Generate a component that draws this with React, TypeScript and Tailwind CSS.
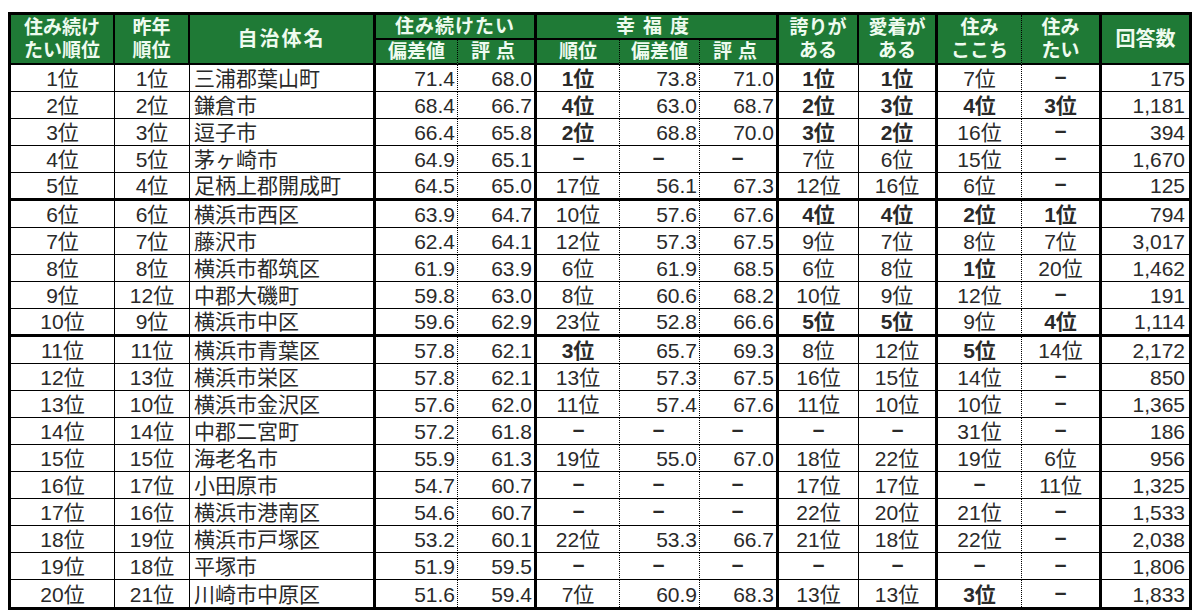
import React from "react";

type Row = string[];

const rows: Row[] = [
  ["1位", "1位", "三浦郡葉山町", "71.4", "68.0", "1位", "73.8", "71.0", "1位", "1位", "7位", "－", "175"],
  ["2位", "2位", "鎌倉市", "68.4", "66.7", "4位", "63.0", "68.7", "2位", "3位", "4位", "3位", "1,181"],
  ["3位", "3位", "逗子市", "66.4", "65.8", "2位", "68.8", "70.0", "3位", "2位", "16位", "－", "394"],
  ["4位", "5位", "茅ヶ崎市", "64.9", "65.1", "－", "－", "－", "7位", "6位", "15位", "－", "1,670"],
  ["5位", "4位", "足柄上郡開成町", "64.5", "65.0", "17位", "56.1", "67.3", "12位", "16位", "6位", "－", "125"],
  ["6位", "6位", "横浜市西区", "63.9", "64.7", "10位", "57.6", "67.6", "4位", "4位", "2位", "1位", "794"],
  ["7位", "7位", "藤沢市", "62.4", "64.1", "12位", "57.3", "67.5", "9位", "7位", "8位", "7位", "3,017"],
  ["8位", "8位", "横浜市都筑区", "61.9", "63.9", "6位", "61.9", "68.5", "6位", "8位", "1位", "20位", "1,462"],
  ["9位", "12位", "中郡大磯町", "59.8", "63.0", "8位", "60.6", "68.2", "10位", "9位", "12位", "－", "191"],
  ["10位", "9位", "横浜市中区", "59.6", "62.9", "23位", "52.8", "66.6", "5位", "5位", "9位", "4位", "1,114"],
  ["11位", "11位", "横浜市青葉区", "57.8", "62.1", "3位", "65.7", "69.3", "8位", "12位", "5位", "14位", "2,172"],
  ["12位", "13位", "横浜市栄区", "57.8", "62.1", "13位", "57.3", "67.5", "16位", "15位", "14位", "－", "850"],
  ["13位", "10位", "横浜市金沢区", "57.6", "62.0", "11位", "57.4", "67.6", "11位", "10位", "10位", "－", "1,365"],
  ["14位", "14位", "中郡二宮町", "57.2", "61.8", "－", "－", "－", "－", "－", "31位", "－", "186"],
  ["15位", "15位", "海老名市", "55.9", "61.3", "19位", "55.0", "67.0", "18位", "22位", "19位", "6位", "956"],
  ["16位", "17位", "小田原市", "54.7", "60.7", "－", "－", "－", "17位", "17位", "－", "11位", "1,325"],
  ["17位", "16位", "横浜市港南区", "54.6", "60.7", "－", "－", "－", "22位", "20位", "21位", "－", "1,533"],
  ["18位", "19位", "横浜市戸塚区", "53.2", "60.1", "22位", "53.3", "66.7", "21位", "18位", "22位", "－", "2,038"],
  ["19位", "18位", "平塚市", "51.9", "59.5", "－", "－", "－", "－", "－", "－", "－", "1,806"],
  ["20位", "21位", "川崎市中原区", "51.6", "59.4", "7位", "60.9", "68.3", "13位", "13位", "3位", "－", "1,833"],
];

const colWidths = [
  "w-[104px]",
  "w-[75px]",
  "w-[186px]",
  "w-[82px]",
  "w-[79px]",
  "w-[83px]",
  "w-[80px]",
  "w-[79px]",
  "w-[80px]",
  "w-[79px]",
  "w-[84px]",
  "w-[80px]",
  "w-[87px]",
];

// right edge of each body column
const bodyRight = [
  "border-r border-r-black",
  "border-r border-r-black",
  "border-r-[3px] border-r-black",
  "border-r border-r-black [border-right-style:dotted]",
  "border-r-[3px] border-r-black",
  "border-r border-r-black [border-right-style:dotted]",
  "border-r border-r-black [border-right-style:dotted]",
  "border-r-[3px] border-r-black",
  "border-r border-r-black",
  "border-r-[3px] border-r-black",
  "border-r border-r-black [border-right-style:dotted]",
  "border-r-[3px] border-r-black",
  "",
];

const bodyAlign = [
  "text-center",
  "text-center",
  "text-left pl-[4px]",
  "text-right pr-[2px]",
  "text-right pr-[2px]",
  "text-center",
  "text-right pr-[2px]",
  "text-right pr-[2px]",
  "text-center",
  "text-center",
  "text-center",
  "text-center",
  "text-right pr-[4px]",
];

// rank columns where top five are shown in bold
const rankCols = [5, 8, 9, 10, 11];

const th =
  "bg-[#1f7a36] text-[#eefbef] font-bold text-[19px] leading-[23px] p-0 text-center align-middle";

export default function App() {
  return (
    <div className="w-[1200px] h-[614px] bg-white pt-[12px] pl-[8px] font-['Liberation_Sans','Noto_Sans_CJK_JP',sans-serif]">
      <table className="table-fixed w-[1184px] border-separate border-spacing-0 border-[3px] border-black text-[#2a2a2a]">
        <colgroup>
          {colWidths.map((w, i) => (
            <col key={i} className={w} />
          ))}
        </colgroup>
        <thead>
          <tr className="h-[25px]">
            <th rowSpan={2} className={`${th} border-r-2 border-b-2 border-black`}>
              住み続け
              <br />
              たい順位
            </th>
            <th rowSpan={2} className={`${th} border-r-2 border-b-2 border-black`}>
              昨年
              <br />
              順位
            </th>
            <th rowSpan={2} className={`${th} border-r-[3px] border-b-2 border-black text-[20px] tracking-[2px]`}>
              自治体名
            </th>
            <th colSpan={2} className={`${th} border-r-[3px] border-b-2 border-black tracking-[1px]`}>
              住み続けたい
            </th>
            <th colSpan={3} className={`${th} border-r-[3px] border-b-2 border-black tracking-[8px]`}>
              幸福度
            </th>
            <th rowSpan={2} className={`${th} border-r-2 border-b-2 border-black`}>
              誇りが
              <br />
              ある
            </th>
            <th rowSpan={2} className={`${th} border-r-[3px] border-b-2 border-black`}>
              愛着が
              <br />
              ある
            </th>
            <th rowSpan={2} className={`${th} border-r border-b-2 border-black [border-right-style:dotted]`}>
              住み
              <br />
              ここち
            </th>
            <th rowSpan={2} className={`${th} border-r-[3px] border-b-2 border-black`}>
              住み
              <br />
              たい
            </th>
            <th rowSpan={2} className={`${th} border-b-2 border-black text-[20px]`}>
              回答数
            </th>
          </tr>
          <tr className="h-[25px]">
            <th className={`${th} border-r border-b-2 border-black [border-right-style:dotted]`}>偏差値</th>
            <th className={`${th} border-r-[3px] border-b-2 border-black tracking-[6px]`}>評点</th>
            <th className={`${th} border-r border-b-2 border-black [border-right-style:dotted]`}>順位</th>
            <th className={`${th} border-r border-b-2 border-black [border-right-style:dotted]`}>偏差値</th>
            <th className={`${th} border-r-[3px] border-b-2 border-black tracking-[6px]`}>評点</th>
          </tr>
        </thead>
        <tbody>
          {rows.map((row, r) => {
            const bottom =
              r === rows.length - 1
                ? ""
                : r === 4 || r === 9
                  ? "border-b-[3px] border-b-black"
                  : "border-b border-b-black";
            return (
              <tr key={r} className="h-[27px]">
                {row.map((cell, c) => {
                  const n = parseInt(cell, 10);
                  const bold = rankCols.includes(c) && !isNaN(n) && n <= 5;
                  return (
                    <td
                      key={c}
                      className={`p-0 text-[21px] leading-[25px] whitespace-nowrap overflow-hidden align-bottom ${bodyAlign[c]} ${bodyRight[c]} ${bottom} ${bold ? "font-bold" : ""}`}
                    >
                      {cell === "－" ? (
                        <div className="text-center">
                          <span className="inline-block scale-x-[0.7] -translate-y-[1px] font-bold">－</span>
                        </div>
                      ) : (
                        cell
                      )}
                    </td>
                  );
                })}
              </tr>
            );
          })}
        </tbody>
      </table>
    </div>
  );
}
